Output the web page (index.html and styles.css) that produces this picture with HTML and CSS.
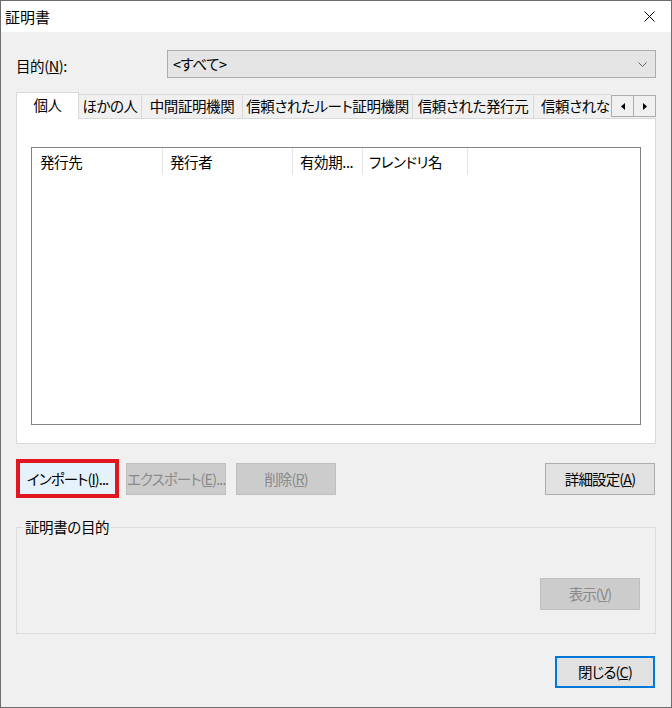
FILE: index.html
```html
<!DOCTYPE html>
<html lang="ja">
<head>
<meta charset="utf-8">
<title>証明書</title>
<link rel="stylesheet" href="styles.css">
</head>
<body>
<div class="window">
  <div class="titlebar">
    <span class="title">証明書</span>
    <span class="close">
      <svg width="11" height="11" viewBox="0 0 11 11"><path d="M0.5 0.5 L10.5 10.5 M10.5 0.5 L0.5 10.5" stroke="#000" stroke-width="1" fill="none"/></svg>
    </span>
  </div>
  <div class="content">
    <div class="purpose-row">
      <span class="purpose-label">目的(<u>N</u>):</span>
      <div class="combo">
        <span class="combo-text">&lt;すべて&gt;</span>
        <svg class="chevron" width="9" height="5" viewBox="0 0 9 5"><polyline points="0.5,0.5 4.5,4.5 8.5,0.5" stroke="#606060" stroke-width="1" fill="none"/></svg>
      </div>
    </div>

    <div class="tabstrip">
      <div class="tabs">
        <div class="tab active t1">個人</div>
        <div class="tab t2">ほかの人</div>
        <div class="tab t3">中間証明機関</div>
        <div class="tab t4">信頼されたルート証明機関</div>
        <div class="tab t5">信頼された発行元</div>
        <div class="tab t6">信頼されない発行元</div>
      </div>
      <div class="scroll">
        <div class="sbtn"><svg width="4" height="7" viewBox="0 0 4 7"><polygon points="4,0 0,3.5 4,7" fill="#000"/></svg></div>
        <div class="sbtn"><svg width="4" height="7" viewBox="0 0 4 7"><polygon points="0,0 4,3.5 0,7" fill="#000"/></svg></div>
      </div>
    </div>

    <div class="panel">
      <div class="listview">
        <div class="lv-header">
          <div class="col c1">発行先</div>
          <div class="col c2">発行者</div>
          <div class="col c3">有効期...</div>
          <div class="col c4">フレンドリ名</div>
        </div>
      </div>
    </div>

    <div class="btn-row">
      <button class="btn import">インポート(<u>I</u>)...</button>
      <button class="btn disabled export">エクスポート(<u>E</u>)...</button>
      <button class="btn disabled delete">削除(<u>R</u>)</button>
      <button class="btn advanced">詳細設定(<u>A</u>)</button>
    </div>

    <fieldset class="group">
      <legend>証明書の目的</legend>
      <div class="group-body">
        <button class="btn disabled view">表示(<u>V</u>)</button>
      </div>
    </fieldset>

    <div class="footer">
      <button class="btn default close-btn">閉じる(<u>C</u>)</button>
    </div>
  </div>
</div>
</body>
</html>
```

FILE: styles.css
```css
* {
  box-sizing: border-box;
}

html, body {
  margin: 0;
  padding: 0;
  background: #f0f0f0;
}

body {
  font-family: "Noto Sans CJK JP", "Noto Sans", sans-serif;
  font-size: 14.5px;
  letter-spacing: -0.4px;
  font-feature-settings: "palt";
  color: #000;
}

.window {
  width: 672px;
  height: 708px;
  border: 1px solid #6e6e6e;
  background: #f0f0f0;
  display: flex;
  flex-direction: column;
}

.titlebar {
  height: 31px;
  background: #fff;
  display: flex;
  align-items: center;
  padding-left: 4px;
  flex-shrink: 0;
}

.title {
  font-size: 15px;
  letter-spacing: 0;
  line-height: 20px;
}

.close {
  margin-left: auto;
  width: 44px;
  height: 31px;
  display: flex;
  align-items: center;
  justify-content: center;
}

.content {
  padding: 0 16px 0 15px;
  display: flex;
  flex-direction: column;
}

.purpose-row {
  margin-top: 18px;
  height: 28px;
  display: flex;
  align-items: center;
}

.purpose-label {
  width: 151px;
  flex-shrink: 0;
  line-height: 20px;
  padding-top: 3px;
}

.combo {
  flex: 1;
  height: 28px;
  margin-right: -1px;
  border: 1px solid #adadad;
  background: #e5e5e5;
  display: flex;
  align-items: center;
  padding-left: 5px;
}

.combo-text {
  line-height: 20px;
}

.chevron {
  margin-left: auto;
  margin-right: 8px;
}

.tabstrip {
  margin-top: 14px;
  height: 27px;
  display: flex;
  align-items: flex-end;
}

.tabs {
  width: 595px;
  height: 27px;
  display: flex;
  align-items: flex-end;
  overflow: hidden;
  flex-shrink: 0;
}

.tab {
  flex-shrink: 0;
  height: 25px;
  border-top: 1px solid #d9d9d9;
  border-right: 1px solid #d9d9d9;
  border-bottom: 1px solid #d9d9d9;
  background: #f0f0f0;
  white-space: nowrap;
  text-align: center;
  line-height: 22px;
}

.tab.active {
  height: 27px;
  border-left: 1px solid #d9d9d9;
  border-bottom: none;
  background: #fff;
  line-height: 24px;
}

.t1 { width: 63px; }
.t2 { width: 63px; }
.t3 { width: 101px; }
.t4 { width: 170px; }
.t5 { width: 121px; }
.t6 { width: 140px; text-align: left; padding-left: 7px; }

.scroll {
  flex: 1;
  height: 27px;
  border-bottom: 1px solid #d9d9d9;
  display: flex;
  align-items: flex-start;
  padding-top: 3px;
}

.sbtn {
  width: 23px;
  height: 22px;
  border: 1px solid #adadad;
  background: #f0f0f0;
  display: flex;
  align-items: center;
  justify-content: center;
}

.sbtn + .sbtn {
  border-left: none;
  width: 22px;
}

.panel {
  width: 640px;
  height: 325px;
  background: #fff;
  border: 1px solid #d9d9d9;
  border-top: none;
  padding: 28px 0 0 14px;
}

.listview {
  width: 610px;
  height: 278px;
  border: 1px solid #828282;
  background: #fff;
}

.lv-header {
  display: flex;
  height: 27px;
}

.col {
  height: 27px;
  border-right: 1px solid #e5e5e5;
  padding-left: 7px;
  line-height: 27px;
  white-space: nowrap;
  overflow: hidden;
  flex-shrink: 0;
}

.c1 { width: 131px; padding-left: 8px; }
.c2 { width: 130px; }
.c3 { width: 70px; }
.c4 { width: 105px; padding-left: 6px; }

.btn-row {
  margin-top: 15px;
  height: 39px;
  display: flex;
  align-items: flex-start;
}

.btn {
  font-family: inherit;
  font-size: 14.5px;
  letter-spacing: -0.9px;
  font-feature-settings: "palt";
  color: #000;
  height: 32px;
  width: 100px;
  border: 1px solid #adadad;
  background: #e1e1e1;
  padding: 0;
  margin: 0;
  line-height: 28px;
  text-align: center;
  white-space: nowrap;
}

.btn.disabled {
  background: #cccccc;
  border-color: #bfbfbf;
  color: #8a8a8a;
}

.btn.import {
  width: 103px;
  height: 39px;
  border: 4px solid #e3161f;
  background: #e5f1fb;
  line-height: 29px;
}

.btn.export {
  margin-top: 4px;
  margin-left: 7px;
}

.btn.delete {
  margin-top: 4px;
  margin-left: 10px;
}

.btn.advanced {
  margin-top: 4px;
  margin-left: auto;
  width: 110px;
}

.group {
  margin: 19px 0 0 0;
  padding: 0;
  width: 640px;
  border: 1px solid #dcdcdc;
}

.group legend {
  margin-left: 6px;
  padding: 0 2px;
  line-height: 20px;
}

.group-body {
  height: 96px;
  display: flex;
  justify-content: flex-end;
  align-items: flex-start;
  padding: 41px 15px 0 0;
}

.footer {
  margin-top: 22px;
  display: flex;
  justify-content: flex-end;
}

.btn.default {
  border: 2px solid #0078d7;
  background: #e1e1e1;
  line-height: 28px;
}
```
